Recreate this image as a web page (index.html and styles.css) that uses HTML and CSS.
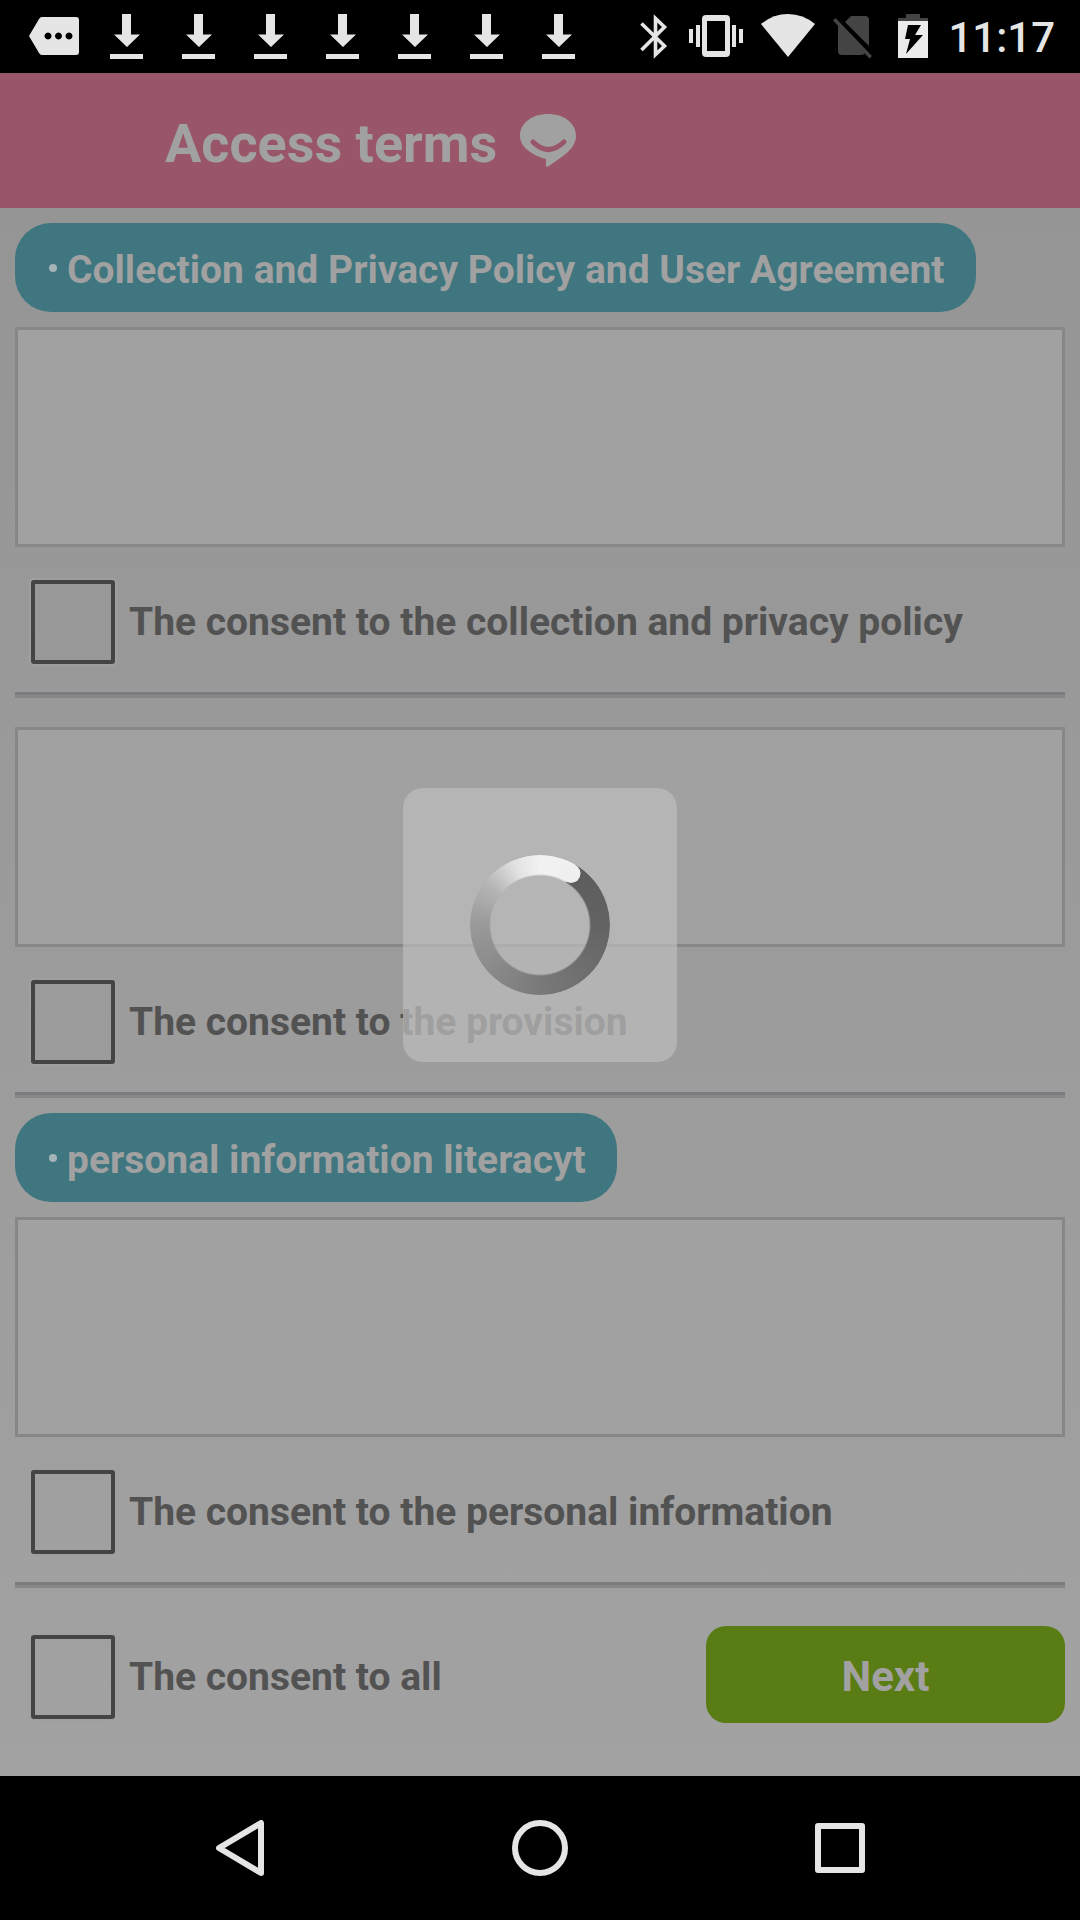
FILE: index.html
```html
<!DOCTYPE html>
<html lang="en">
<head>
<meta charset="utf-8">
<meta name="viewport" content="width=device-width, initial-scale=1">
<title>Access terms</title>
<link rel="stylesheet" href="styles.css">
</head>
<body>
<svg class="defs" aria-hidden="true">
  <symbol id="download" viewBox="0 0 72 73">
    <path d="M32 14h9v20.500h9L37 47 24 34.500h8zM20 54h33v5H20z"/>
  </symbol>
</svg>

<div class="status">
  <div class="status-left">
    <svg class="slot" viewBox="0 0 72 73"><path fill-rule="evenodd" d="M24 17h34q3 0 3 3v32q0 3-3 3H24q-2 0-3-2L11 36l10-17q1-2 3-2zM30 32.500a3.500 3.500 0 1 0 .01 0zM40.500 32.500a3.500 3.500 0 1 0 .01 0zM51 32.500a3.500 3.500 0 1 0 .01 0z"/></svg>
    <svg class="slot"><use href="#download"/></svg>
    <svg class="slot"><use href="#download"/></svg>
    <svg class="slot"><use href="#download"/></svg>
    <svg class="slot"><use href="#download"/></svg>
    <svg class="slot"><use href="#download"/></svg>
    <svg class="slot"><use href="#download"/></svg>
    <svg class="slot"><use href="#download"/></svg>
  </div>
  <div class="status-right">
    <svg class="icon-bt" viewBox="0 0 28 73"><path fill="none" stroke="#e5e5e5" stroke-width="3.600" d="M1.500 23.500l23 22.500-9 8.500V18.500l9 8.500-23 23"/></svg>
    <svg class="icon-vib" viewBox="0 0 54 73"><path fill-rule="evenodd" d="M17 15h20q4 0 4 4v34q0 4-4 4H17q-4 0-4-4V19q0-4 4-4zm1 6v30h18V21zM0 29h4v14H0zM7 25h4v22H7zM43 25h4v22h-4zM50 29h4v14h-4z"/></svg>
    <svg class="icon-wifi" viewBox="0 0 54 73"><path d="M0 24Q12 14 27 14t27 10L27 57z"/></svg>
    <svg class="icon-sim" viewBox="0 0 40 73"><path fill="#444" d="M18 16h14q4 0 4 4v26L12 22zM5 25l27 28q-1 2-4 2H9q-4 0-4-4zM2.500 18L39 56l-2.500 2.500L0 20.500z"/></svg>
    <svg class="icon-bat" viewBox="0 0 30 73"><path fill="#444" d="M8 14h14v4h8v4H0v-4h8z"/><path fill="#ebebeb" d="M0 21h30v37H0z"/><path fill="#000" d="M10 25h13l-6 10h8L8 54l4-15H7z"/></svg>
    <time class="clock">11:17</time>
  </div>
</div>

<main class="app">
  <header class="bar">
    <h1 class="title">Access terms</h1>
    <svg class="logo" viewBox="0 0 56 53"><path fill="#a1a1a1" d="M28 0c16 0 28 9 28 22 0 8-6 15-13 20l-14 10q-3 2-3-1v-6q-5-1-11-4C6 36 0 30 0 22 0 9 12 0 28 0z"/><path fill="none" stroke="#985668" stroke-width="5" stroke-linecap="round" d="M13 28q15 15 31 0"/></svg>
  </header>

  <form class="terms">
    <h2 class="pill"><span class="dot"></span>Collection and Privacy Policy and User Agreement</h2>
    <textarea class="text" readonly aria-label="Collection and Privacy Policy and User Agreement"></textarea>
    <label class="consent"><input class="check" type="checkbox">The consent to the collection and privacy policy</label>
    <hr class="rule">
    <textarea class="text second" readonly aria-label="Provision"></textarea>
    <label class="consent"><input class="check" type="checkbox">The consent to the provision</label>
    <hr class="rule">
    <h2 class="pill spaced"><span class="dot"></span>personal information literacyt</h2>
    <textarea class="text" readonly aria-label="Personal information"></textarea>
    <label class="consent"><input class="check" type="checkbox">The consent to the personal information</label>
    <hr class="rule">
    <div class="footer">
      <label class="consent all"><input class="check" type="checkbox">The consent to all</label>
      <button class="next" type="button">Next</button>
    </div>
  </form>

  <div class="overlay">
    <div class="loader" role="status" aria-label="Loading">
      <svg class="cap" viewBox="0 0 140 140"><circle cx="101" cy="18.500" r="9.500"/></svg>
    </div>
  </div>
</main>

<nav class="nav">
  <button class="key" type="button" aria-label="Back"><svg viewBox="0 0 56 56"><path d="M49 3v50L7 28z"/></svg></button>
  <button class="key" type="button" aria-label="Home"><svg viewBox="0 0 56 56"><circle cx="28" cy="28" r="25"/></svg></button>
  <button class="key" type="button" aria-label="Recent apps"><svg viewBox="0 0 56 56"><path d="M6 6h44v44H6z"/></svg></button>
</nav>
</body>
</html>
```

FILE: styles.css
```css
* {
  box-sizing: border-box;
}

body {
  margin: 0;
  min-height: 100vh;
  display: flex;
  flex-direction: column;
  background: #000;
  font-family: Roboto, "Noto Sans", sans-serif;
}

.defs {
  display: none;
}

/* Status bar */
.status {
  height: 73px;
  padding: 0 25px 0 18px;
  display: flex;
  justify-content: space-between;
  color: #e5e5e5;
  fill: #e5e5e5;
}

.status-left,
.status-right {
  display: flex;
}

.status-right {
  gap: 18px;
}

.status svg {
  height: 73px;
}

.slot {
  width: 72px;
}

.icon-bt {
  width: 28px;
  margin-right: 3px;
}

.icon-vib,
.icon-wifi {
  width: 54px;
}

.icon-sim {
  width: 40px;
}

.icon-bat {
  width: 30px;
  margin: 0 2px 0 7px;
}

.clock {
  font-size: 42px;
  font-weight: 500;
  line-height: 76px;
}

/* App */
.app {
  position: relative;
  flex: 1;
  background: linear-gradient(#949494, #a2a2a2);
}

.bar {
  height: 135px;
  padding-left: 165px;
  display: flex;
  align-items: center;
  gap: 23px;
  background: #985668;
}

.title {
  margin: 0;
  padding-top: 6px;
  font-size: 54px;
  line-height: 64px;
  color: #a1a1a1;
}

.logo {
  width: 56px;
  height: 53px;
}

.terms {
  padding: 15px;
}

.pill {
  width: fit-content;
  height: 89px;
  margin: 0 0 15px;
  padding: 5px 31px 0 34px;
  display: flex;
  align-items: center;
  border-radius: 36px;
  background: #3f767f;
  color: #a1a1a1;
  font-size: 39px;
}

.spaced {
  margin-top: 15px;
}

.dot {
  width: 8px;
  height: 8px;
  margin: 0 10px 4px 0;
  border-radius: 4px;
  background: #a4b4b7;
}

.text {
  display: block;
  width: 100%;
  height: 220px;
  border: 3px solid #878787;
  border-radius: 0;
  background: #a1a1a1;
  resize: none;
  outline: none;
}

.second {
  margin-top: 29px;
}

.consent {
  padding: 33px 0 28px 16px;
  display: flex;
  align-items: center;
  gap: 14px;
  color: #525252;
  font-size: 39px;
  font-weight: bold;
}

.check {
  appearance: none;
  width: 84px;
  height: 84px;
  margin: 0;
  flex: none;
  border: 4px solid #444;
  border-radius: 3px;
  box-shadow: 0 0 3px 2px #a0a0a0;
}

.rule {
  height: 6px;
  margin: 0;
  border: 0;
  border-top: 3px solid #7b7b80;
  background: #878787;
}

.footer {
  padding-top: 38px;
  display: flex;
  justify-content: space-between;
  align-items: flex-start;
}

.all {
  padding-top: 9px;
}

.next {
  width: 359px;
  height: 97px;
  padding: 4px 0 0;
  border: 0;
  border-radius: 20px;
  background: #5a7c14;
  color: #a1a1a1;
  font-family: inherit;
  font-size: 42px;
  font-weight: bold;
}

/* Loading indicator */
.overlay {
  position: absolute;
  inset: 0;
  display: flex;
  align-items: center;
  justify-content: center;
}

.overlay::before {
  content: "";
  position: absolute;
  width: 274px;
  height: 274px;
  border-radius: 20px;
  background: rgba(189, 189, 189, 0.72);
}

.loader {
  position: relative;
  width: 140px;
  height: 140px;
  border-radius: 50%;
  background: conic-gradient(#f2f2f2 0deg, #efefef 30deg, #5c5c5c 32deg, #636363 90deg, #797979 180deg, #999 270deg, #b4b4b4 308deg, #e2e2e2 338deg, #f2f2f2 360deg);
  -webkit-mask: radial-gradient(circle, transparent 49px, #000 51px);
  mask: radial-gradient(circle, transparent 49px, #000 51px);
}

.cap {
  display: block;
  fill: #efefef;
}

/* Navigation bar */
.nav {
  height: 144px;
  display: flex;
  justify-content: center;
}

.key {
  width: 300px;
  padding: 0;
  display: flex;
  align-items: center;
  justify-content: center;
  border: 0;
  background: none;
}

.key svg {
  width: 56px;
  height: 56px;
  fill: none;
  stroke: #e5e5e5;
  stroke-width: 6;
  stroke-linejoin: round;
}
```
